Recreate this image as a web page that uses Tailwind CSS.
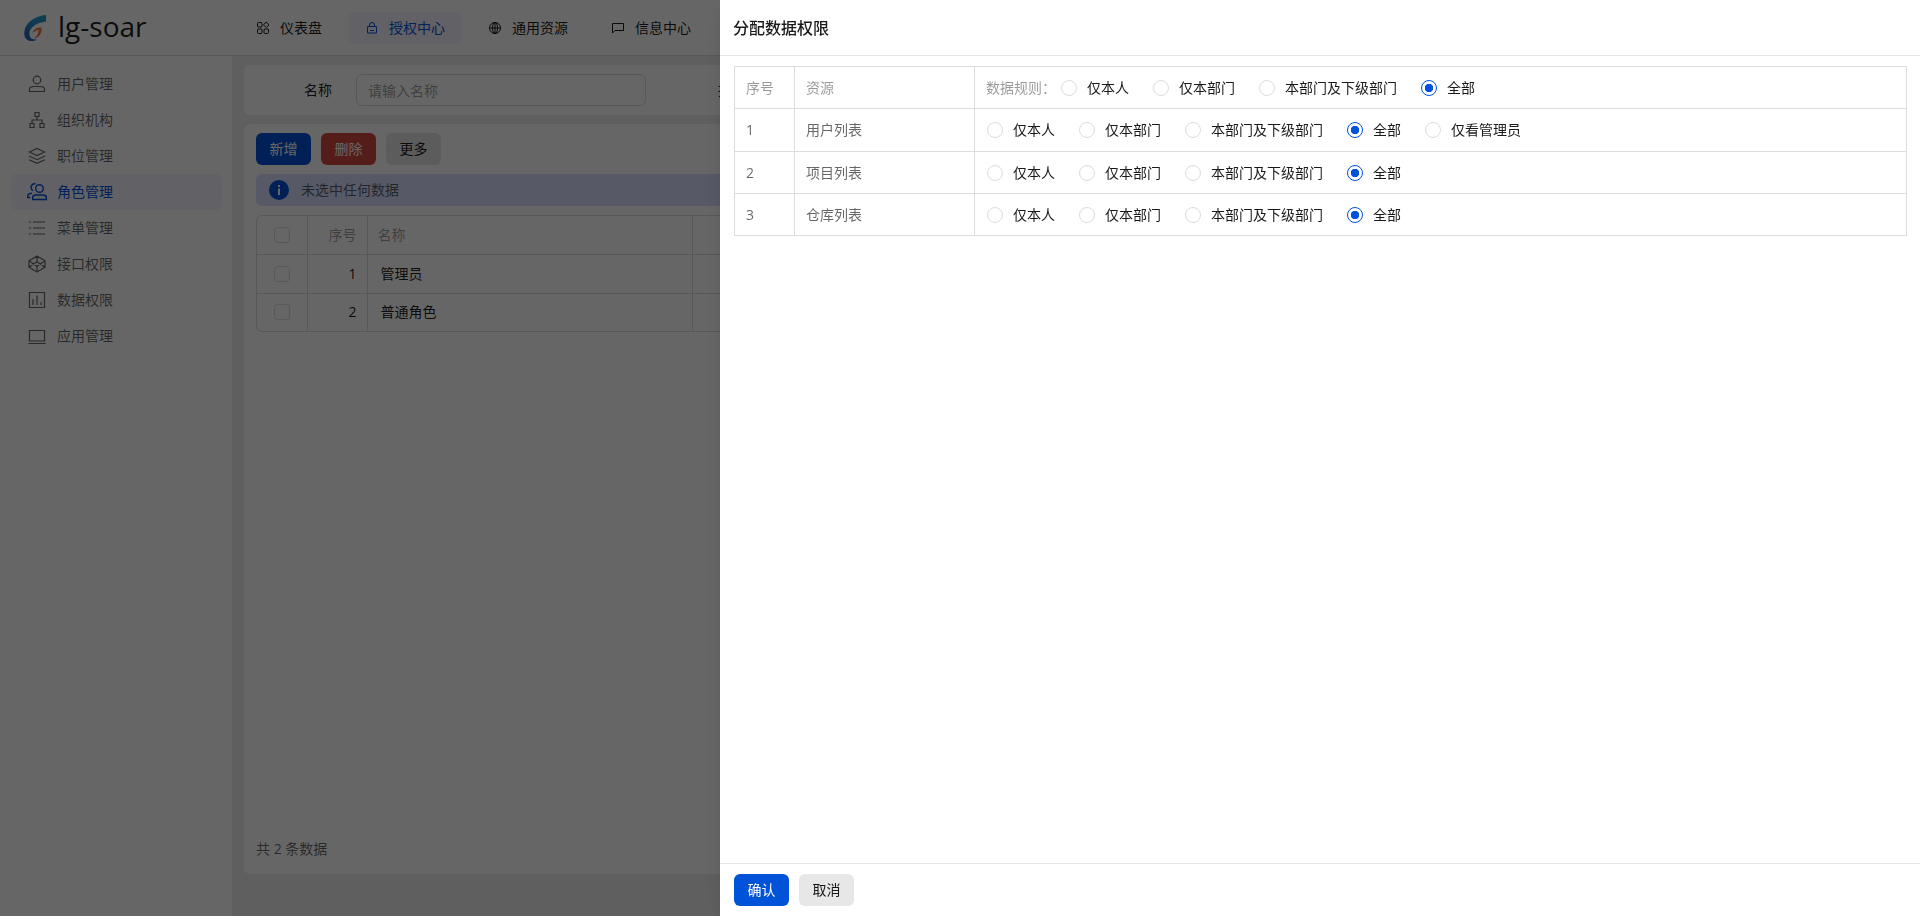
<!DOCTYPE html>
<html lang="zh-CN">
<head>
<meta charset="utf-8">
<title>lg-soar</title>
<script src="https://cdn.jsdelivr.net/npm/@tailwindcss/browser@4"></script>
</head>
<body class="h-screen overflow-hidden bg-[#eeeeee] font-['Open_Sans','Noto_Sans_CJK_SC',sans-serif] text-sm leading-[22px] text-black/90">
<div class="flex h-screen flex-col">
  <header class="flex h-14 shrink-0 items-center border-b border-[#dcdcdc] bg-white">
    <a href="#" class="flex w-60 shrink-0 items-center gap-3 pl-6">
      <svg class="h-7 w-[22px]" viewBox="0 0 22 28" aria-hidden="true">
        <defs>
          <linearGradient id="lg-blue" x1="1" y1="0" x2="0" y2="1"><stop offset="0" stop-color="#1f9bd0"/><stop offset=".5" stop-color="#2a8fd0"/><stop offset="1" stop-color="#2a52a8"/></linearGradient>
          <linearGradient id="lg-orange" x1="1" y1="0" x2="0" y2="1"><stop offset="0" stop-color="#f2894a"/><stop offset="1" stop-color="#e8452c"/></linearGradient>
        </defs>
        <path fill="url(#lg-blue)" d="M22 1C11 2 2 8 .5 17c-1 6 2 10 7 10 2 0 4-.5 5.500-1.500-4 .5-7-1-7.500-4.500C4.500 14 12 9 22 7.500z"/>
        <path fill="url(#lg-orange)" d="M17.500 13.500c-4-.5-8 1.500-9 5.500 2-2 4.500-2.500 5.500-1.500 1 1.500-.5 4.500-4 7 5-1 8.500-5.500 7.500-11z"/>
        <path fill="#fff" d="M14.800 16c-1.500-.3-3 .2-4 1 1.500-.3 3-.3 3.600.6.400-.5.500-1.100.4-1.600z"/>
      </svg>
      <span class="pb-1 text-[28px] leading-8">lg-soar</span>
    </a>
    <nav class="flex gap-[11px]">
      <a href="#" class="flex h-8 items-center gap-2.5 rounded-md px-4">
        <svg class="size-3.5" viewBox="0 0 14 14" fill="none" stroke="currentColor" aria-hidden="true"><rect x="1.500" y="1.500" width="4.500" height="4.500" rx="1"/><rect x="1.500" y="8" width="4.500" height="4.500" rx="1"/><rect x="8" y="8" width="4.500" height="4.500" rx="1"/><path d="M10.200 1l2.800 2.800-2.800 2.700-2.700-2.700z"/></svg>
        仪表盘</a>
      <a href="#" class="flex h-8 items-center gap-2.5 rounded-md bg-[#f2f3ff] px-4 text-[#0052d9]">
        <svg class="size-3.5" viewBox="0 0 14 14" fill="none" stroke="currentColor" aria-hidden="true"><path d="M2.500 5.500h9v6.500h-9zM4.500 5.500V4a2.500 2.500 0 0 1 5 0v1.500M5 9.500h4"/></svg>
        授权中心</a>
      <a href="#" class="flex h-8 items-center gap-2.5 rounded-md px-4">
        <svg class="size-3.5" viewBox="0 0 14 14" fill="none" stroke="currentColor" aria-hidden="true"><circle cx="7" cy="7" r="5.500"/><ellipse cx="7" cy="7" rx="2.500" ry="5.500"/><path d="M1.500 7h11M7 1.500v11"/></svg>
        通用资源</a>
      <a href="#" class="flex h-8 items-center gap-2.5 rounded-md px-4">
        <svg class="size-3.5" viewBox="0 0 14 14" fill="none" stroke="currentColor" aria-hidden="true"><path d="M1.500 12V2.500h11v7H4z"/></svg>
        信息中心</a>
    </nav>
  </header>
  <div class="flex min-h-0 flex-1">
    <aside class="w-[232px] shrink-0 bg-white py-2.5 pr-2.5 pl-[11px]">
      <nav class="flex flex-col text-black/60">
        <a href="#" class="flex h-9 items-center gap-2.5 rounded-md pl-4">
          <svg class="size-5" viewBox="0 0 20 20" fill="none" stroke="currentColor" stroke-width="1.200" aria-hidden="true"><circle cx="10" cy="6" r="3.800"/><path d="M2.500 17.500v-2.300c0-1.500 2-2.700 4.500-2.700h6c2.500 0 4.500 1.200 4.500 2.700v2.300z"/></svg>
          用户管理</a>
        <a href="#" class="flex h-9 items-center gap-2.5 rounded-md pl-4">
          <svg class="size-5" viewBox="0 0 20 20" fill="none" stroke="currentColor" stroke-width="1.200" aria-hidden="true"><path d="M8 2.500h4v4H8zM3 13.500h4v4H3zM13 13.500h4v4h-4zM10 6.500V10M5 13.500V10h10v3.500"/></svg>
          组织机构</a>
        <a href="#" class="flex h-9 items-center gap-2.5 rounded-md pl-4">
          <svg class="size-5" viewBox="0 0 20 20" fill="none" stroke="currentColor" stroke-width="1.200" aria-hidden="true"><path d="M10 2.500l7.500 3.500-7.500 3.500L2.500 6zM2 10l8 3.700L18 10M2 13.700l8 3.700 8-3.700"/></svg>
          职位管理</a>
        <a href="#" class="flex h-9 items-center gap-2.5 rounded-md bg-[#f2f3ff] pl-4 text-[#0052d9]">
          <svg class="size-5" viewBox="0 0 20 20" fill="none" stroke="currentColor" stroke-width="1.400" aria-hidden="true"><circle cx="12.500" cy="6.500" r="3.800"/><path d="M5.700 17.500V15.500c0-1.500 1.500-2.500 3.500-2.500h6.600c2 0 3.500 1 3.500 2.500v2zM8.500 1.800C6 1.500 4 3 4 5.300c0 1.600.8 2.700 2 3.300M5 11.200c-2.500 0-4.300 1-4.300 3v1.300h2.500"/></svg>
          角色管理</a>
        <a href="#" class="flex h-9 items-center gap-2.5 rounded-md pl-4">
          <svg class="size-5" viewBox="0 0 20 20" fill="none" stroke="currentColor" stroke-width="1.200" aria-hidden="true"><path d="M6 4h12M6 10h12M6 16h12M2 4h2M2 10h2M2 16h2"/></svg>
          菜单管理</a>
        <a href="#" class="flex h-9 items-center gap-2.5 rounded-md pl-4">
          <svg class="size-5" viewBox="0 0 20 20" fill="none" stroke="currentColor" stroke-width="1.200" stroke-linejoin="round" aria-hidden="true"><path d="M10 2l8 4.800v6.400L10 18l-8-4.800V6.800zM2 6.800l8 5.500 8-5.500M2 13.200l8-5.500 8 5.500M10 2v5.700M10 12.300V18"/></svg>
          接口权限</a>
        <a href="#" class="flex h-9 items-center gap-2.5 rounded-md pl-4">
          <svg class="size-5" viewBox="0 0 20 20" fill="none" stroke="currentColor" stroke-width="1.200" aria-hidden="true"><path d="M2.500 2.500h15v15h-15zM6 9v6M10 5.500V15M14 12v3"/></svg>
          数据权限</a>
        <a href="#" class="flex h-9 items-center gap-2.5 rounded-md pl-4">
          <svg class="size-5" viewBox="0 0 20 20" fill="none" stroke="currentColor" stroke-width="1.200" aria-hidden="true"><path d="M2.500 4.500h15v10.500h-15zM1.300 17.500h17.400"/></svg>
          应用管理</a>
      </nav>
    </aside>
    <main class="flex min-w-0 flex-1 flex-col gap-[9px] px-3 pt-[9px] pb-[42px]">
      <form class="grid grid-cols-4 gap-6 rounded-md bg-white py-[9px] pr-5 pl-3">
        <div class="flex items-center">
          <label for="f-name" class="w-[100px] shrink-0 pr-6 text-right">名称</label>
          <input id="f-name" type="text" placeholder="请输入名称" class="h-8 w-full min-w-0 rounded-md border border-[#dcdcdc] px-[11px] placeholder:text-black/40">
        </div>
        <div class="flex items-center">
          <label for="f-desc" class="w-[100px] shrink-0 pr-6 text-right">描述</label>
          <input id="f-desc" type="text" placeholder="请输入描述" class="h-8 w-full min-w-0 rounded-md border border-[#dcdcdc] px-[11px] placeholder:text-black/40">
        </div>
      </form>
      <section class="flex min-h-0 flex-1 flex-col rounded-md bg-white px-3 pt-[9px] pb-3.5">
        <div class="flex gap-2.5">
          <button type="button" class="h-8 w-[55px] rounded-md bg-[#0052d9] text-white">新增</button>
          <button type="button" class="h-8 w-[55px] rounded-md bg-[#d54941] text-white">删除</button>
          <button type="button" class="h-8 w-[55px] rounded-md bg-[#e7e7e7]">更多</button>
        </div>
        <div class="mt-[9px] flex h-8 items-center gap-3 rounded-md bg-[#d9e1ff] pl-[13px] text-black/60">
          <svg class="size-5" viewBox="0 0 20 20" aria-hidden="true"><circle cx="10" cy="10" r="10" fill="#0052d9"/><path stroke="#fff" stroke-width="2" d="M10 5v2M10 8.500V15"/></svg>
          未选中任何数据
        </div>
        <div class="mt-[9px] overflow-hidden rounded-md border border-[#dcdcdc]">
          <table class="w-full table-fixed border-collapse">
            <colgroup><col class="w-[50px]"><col class="w-[60px]"><col class="w-[325px]"><col></colgroup>
            <thead>
              <tr class="h-[38px] border-b border-[#dcdcdc] text-black/40">
                <th class="border-r border-[#dcdcdc]"><input type="checkbox" aria-label="全选" class="block mx-auto size-4 appearance-none rounded-[4px] border border-[#dcdcdc]"></th>
                <th class="border-r border-[#dcdcdc] pr-2.5 text-right font-normal">序号</th>
                <th class="border-r border-[#dcdcdc] pl-2.5 text-left font-normal">名称</th>
                <th></th>
              </tr>
            </thead>
            <tbody>
              <tr class="h-[39px] border-b border-[#dcdcdc]">
                <td class="border-r border-[#dcdcdc]"><input type="checkbox" aria-label="选择管理员" class="block mx-auto size-4 appearance-none rounded-[4px] border border-[#dcdcdc]"></td>
                <td class="border-r border-[#dcdcdc] pr-2.5 text-right">1</td>
                <td class="border-r border-[#dcdcdc] pl-[13px]">管理员</td>
                <td></td>
              </tr>
              <tr class="h-[38px]">
                <td class="border-r border-[#dcdcdc]"><input type="checkbox" aria-label="选择普通角色" class="block mx-auto size-4 appearance-none rounded-[4px] border border-[#dcdcdc]"></td>
                <td class="border-r border-[#dcdcdc] pr-2.5 text-right">2</td>
                <td class="border-r border-[#dcdcdc] pl-[13px]">普通角色</td>
                <td></td>
              </tr>
            </tbody>
          </table>
        </div>
        <p class="mt-auto text-black/60">共 2 条数据</p>
      </section>
    </main>
  </div>
</div>

<div class="fixed inset-0 bg-black/60"></div>
<div role="dialog" aria-labelledby="drawer-title" class="fixed inset-y-0 right-0 flex w-5/8 flex-col bg-white shadow-[0_6px_30px_rgba(0,0,0,0.05),0_16px_24px_rgba(0,0,0,0.04),0_8px_10px_rgba(0,0,0,0.08)]">
  <div class="flex h-14 shrink-0 items-center border-b border-[#e7e7e7] px-[13px]">
    <h2 id="drawer-title" class="text-base font-medium">分配数据权限</h2>
  </div>
  <div class="flex-1 pt-2.5 pr-[13px] pl-3.5">
    <table class="w-full table-fixed border-collapse border border-[#dcdcdc]">
      <colgroup><col class="w-[60px]"><col class="w-[180px]"><col></colgroup>
      <thead>
        <tr class="h-[42px] text-left text-black/40">
          <th class="border border-[#dcdcdc] px-[11px] font-normal">序号</th>
          <th class="border border-[#dcdcdc] px-[11px] font-normal">资源</th>
          <th class="border border-[#dcdcdc] px-[11px] font-normal">
            <div class="flex items-center gap-[5px]"><span>数据规则：</span>
              <div class="flex gap-6 text-black/90">
                <label class="flex items-center gap-2.5"><input type="radio" name="r0" class="size-4 appearance-none rounded-full border border-[#dcdcdc] checked:border-[#0052d9] checked:bg-[radial-gradient(circle,#0052d9_4px,white_4.5px)]">仅本人</label>
                <label class="flex items-center gap-2.5"><input type="radio" name="r0" class="size-4 appearance-none rounded-full border border-[#dcdcdc] checked:border-[#0052d9] checked:bg-[radial-gradient(circle,#0052d9_4px,white_4.5px)]">仅本部门</label>
                <label class="flex items-center gap-2.5"><input type="radio" name="r0" class="size-4 appearance-none rounded-full border border-[#dcdcdc] checked:border-[#0052d9] checked:bg-[radial-gradient(circle,#0052d9_4px,white_4.5px)]">本部门及下级部门</label>
                <label class="flex items-center gap-2.5"><input type="radio" name="r0" checked class="size-4 appearance-none rounded-full border border-[#dcdcdc] checked:border-[#0052d9] checked:bg-[radial-gradient(circle,#0052d9_4px,white_4.5px)]">全部</label>
              </div>
            </div>
          </th>
        </tr>
      </thead>
      <tbody>
        <tr class="h-[43px]">
          <td class="border border-[#dcdcdc] px-[11px] text-black/60">1</td>
          <td class="border border-[#dcdcdc] px-[11px] text-black/60">用户列表</td>
          <td class="border border-[#dcdcdc] px-3">
            <div class="flex gap-6">
              <label class="flex items-center gap-2.5"><input type="radio" name="r1" class="size-4 appearance-none rounded-full border border-[#dcdcdc] checked:border-[#0052d9] checked:bg-[radial-gradient(circle,#0052d9_4px,white_4.5px)]">仅本人</label>
              <label class="flex items-center gap-2.5"><input type="radio" name="r1" class="size-4 appearance-none rounded-full border border-[#dcdcdc] checked:border-[#0052d9] checked:bg-[radial-gradient(circle,#0052d9_4px,white_4.5px)]">仅本部门</label>
              <label class="flex items-center gap-2.5"><input type="radio" name="r1" class="size-4 appearance-none rounded-full border border-[#dcdcdc] checked:border-[#0052d9] checked:bg-[radial-gradient(circle,#0052d9_4px,white_4.5px)]">本部门及下级部门</label>
              <label class="flex items-center gap-2.5"><input type="radio" name="r1" checked class="size-4 appearance-none rounded-full border border-[#dcdcdc] checked:border-[#0052d9] checked:bg-[radial-gradient(circle,#0052d9_4px,white_4.5px)]">全部</label>
              <label class="flex items-center gap-2.5"><input type="radio" name="r1" class="size-4 appearance-none rounded-full border border-[#dcdcdc] checked:border-[#0052d9] checked:bg-[radial-gradient(circle,#0052d9_4px,white_4.5px)]">仅看管理员</label>
            </div>
          </td>
        </tr>
        <tr class="h-[42px]">
          <td class="border border-[#dcdcdc] px-[11px] text-black/60">2</td>
          <td class="border border-[#dcdcdc] px-[11px] text-black/60">项目列表</td>
          <td class="border border-[#dcdcdc] px-3">
            <div class="flex gap-6">
              <label class="flex items-center gap-2.5"><input type="radio" name="r2" class="size-4 appearance-none rounded-full border border-[#dcdcdc] checked:border-[#0052d9] checked:bg-[radial-gradient(circle,#0052d9_4px,white_4.5px)]">仅本人</label>
              <label class="flex items-center gap-2.5"><input type="radio" name="r2" class="size-4 appearance-none rounded-full border border-[#dcdcdc] checked:border-[#0052d9] checked:bg-[radial-gradient(circle,#0052d9_4px,white_4.5px)]">仅本部门</label>
              <label class="flex items-center gap-2.5"><input type="radio" name="r2" class="size-4 appearance-none rounded-full border border-[#dcdcdc] checked:border-[#0052d9] checked:bg-[radial-gradient(circle,#0052d9_4px,white_4.5px)]">本部门及下级部门</label>
              <label class="flex items-center gap-2.5"><input type="radio" name="r2" checked class="size-4 appearance-none rounded-full border border-[#dcdcdc] checked:border-[#0052d9] checked:bg-[radial-gradient(circle,#0052d9_4px,white_4.5px)]">全部</label>
            </div>
          </td>
        </tr>
        <tr class="h-[42px]">
          <td class="border border-[#dcdcdc] px-[11px] text-black/60">3</td>
          <td class="border border-[#dcdcdc] px-[11px] text-black/60">仓库列表</td>
          <td class="border border-[#dcdcdc] px-3">
            <div class="flex gap-6">
              <label class="flex items-center gap-2.5"><input type="radio" name="r3" class="size-4 appearance-none rounded-full border border-[#dcdcdc] checked:border-[#0052d9] checked:bg-[radial-gradient(circle,#0052d9_4px,white_4.5px)]">仅本人</label>
              <label class="flex items-center gap-2.5"><input type="radio" name="r3" class="size-4 appearance-none rounded-full border border-[#dcdcdc] checked:border-[#0052d9] checked:bg-[radial-gradient(circle,#0052d9_4px,white_4.5px)]">仅本部门</label>
              <label class="flex items-center gap-2.5"><input type="radio" name="r3" class="size-4 appearance-none rounded-full border border-[#dcdcdc] checked:border-[#0052d9] checked:bg-[radial-gradient(circle,#0052d9_4px,white_4.5px)]">本部门及下级部门</label>
              <label class="flex items-center gap-2.5"><input type="radio" name="r3" checked class="size-4 appearance-none rounded-full border border-[#dcdcdc] checked:border-[#0052d9] checked:bg-[radial-gradient(circle,#0052d9_4px,white_4.5px)]">全部</label>
            </div>
          </td>
        </tr>
      </tbody>
    </table>
  </div>
  <div class="flex shrink-0 gap-2.5 border-t border-[#e7e7e7] px-3.5 py-2.5">
    <button type="button" class="h-8 w-[55px] rounded-md bg-[#0052d9] text-white">确认</button>
    <button type="button" class="h-8 w-[55px] rounded-md bg-[#e7e7e7]">取消</button>
  </div>
</div>
</body>
</html>
